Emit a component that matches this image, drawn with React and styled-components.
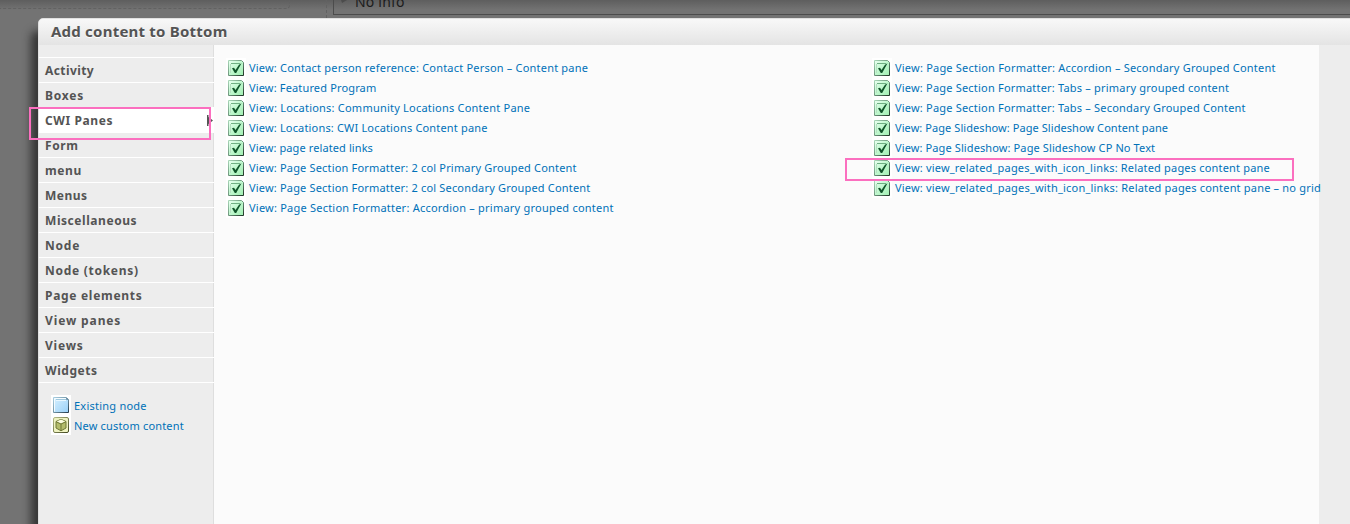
import React from "react";
import styled, { createGlobalStyle } from "styled-components";

const Global = createGlobalStyle`
  * { box-sizing: border-box; }
  html, body { margin: 0; padding: 0; overflow: hidden; }
  body { font-family: "Noto Sans", "Open Sans", sans-serif; }
`;

const Page = styled.div`
  position: relative;
  width: 1350px;
  height: 524px;
  overflow: hidden;
  background: linear-gradient(#5e5e5e, #737373 10px);
`;

const Backdrop = styled.div`
  display: flex;
  height: 18px;
  align-items: flex-start;
`;

const DashedRegion = styled.div`
  width: 290px;
  height: 9px;
  margin-right: 36px;
  border: 1px dashed #626262;
  border-width: 0 1px 1px 0;
  border-radius: 0 0 4px 0;
`;

const InfoRegion = styled.div`
  flex: 1;
  height: 18px;
  padding-left: 6px;
  border-left: 1px dashed #626262;
`;

const InfoPane = styled.div`
  display: flex;
  height: 15px;
  padding-left: 7px;
  border: 1px solid #4c4c4c;
  border-width: 0 0 1px 1px;
  color: #1c1c1c;
  font-size: 14px;
  line-height: 18px;
  letter-spacing: 0.2px;
  svg { flex: none; margin-right: 8px; }
  span { margin-top: -7px; }
`;

const Modal = styled.section`
  position: absolute;
  left: 38px;
  top: 18px;
  width: 1330px;
  height: 540px;
  display: flex;
  flex-direction: column;
  border: 1px solid #e0e0e0;
  border-radius: 5px 0 0 0;
  background: #ededed;
  box-shadow: -6px 14px 9px 1px rgba(25, 25, 25, 0.68);
`;

const Header = styled.header`
  height: 26px;
  flex: none;
  padding-left: 12px;
  border-radius: 4px 0 0 0;
  background: linear-gradient(#f8f8f8, #e4e4e4);
  color: #545454;
  font-size: 15px;
  font-weight: 700;
  line-height: 25px;
  letter-spacing: 0.22px;
  text-shadow: 0 1px 0 #fff;
`;

const Body = styled.div`
  display: flex;
  flex: 1;
`;

const Sidebar = styled.nav`
  width: 175px;
  flex: none;
  padding-top: 12px;
  border-right: 1px solid #dedede;
`;

const Categories = styled.div`
  margin-right: -1px;
  border-top: 1px solid #fff;
`;

const Category = styled.div`
  display: flex;
  align-items: center;
  justify-content: space-between;
  height: 25px;
  padding: 1px 1px 0 6px;
  border-bottom: 1px solid #fff;
  background: ${(p) => (p.$active ? "#fff" : "transparent")};
  color: #545454;
  font-size: 12px;
  font-weight: 700;
  line-height: 24px;
  letter-spacing: ${(p) => p.$tracking}px;
`;

const Tools = styled.div`
  width: 150px;
  margin: 12px 0 0 12px;
`;

const Content = styled.main`
  display: flex;
  width: 1105px;
  flex: none;
  padding: 13px 0 0 12px;
  background: #fbfbfb;
`;

const Column = styled.div`
  width: 646px;
  flex: none;
`;

const Row = styled.div`
  display: flex;
  height: 20px;
`;

const IconTile = styled.span`
  width: 20px;
  height: 20px;
  flex: none;
  padding: 2px;
  background: #fff;
  svg { display: block; }
`;

const Link = styled.a`
  margin-left: 3px;
  color: #0071b8;
  font-size: 11px;
  line-height: ${(p) => p.$leading || 20}px;
  white-space: nowrap;
  letter-spacing: ${(p) => p.$tracking || 0}px;
`;

const Highlight = styled.div`
  position: absolute;
  left: ${(p) => p.$x}px;
  top: ${(p) => p.$y}px;
  width: ${(p) => p.$w}px;
  height: ${(p) => p.$h}px;
  border: 2px solid #fb6fbf;
`;

const CheckIcon = () => (
  <svg width="16" height="16" viewBox="0 0 16 16">
    <defs>
      <linearGradient id="mint" x1="0" y1="0" x2="1" y2="1">
        <stop offset="0" stopColor="#ecfff2" />
        <stop offset="0.45" stopColor="#c2f8d0" />
        <stop offset="1" stopColor="#a0efb2" />
      </linearGradient>
      <linearGradient id="mintEdge" x1="0" y1="0" x2="1" y2="1">
        <stop offset="0" stopColor="#a9d7b8" />
        <stop offset="0.5" stopColor="#6d947c" />
        <stop offset="1" stopColor="#1d3224" />
      </linearGradient>
    </defs>
    <path d="M.5.5H13.5L15.5 2.5V15.5H.5Z" fill="url(#mint)" stroke="url(#mintEdge)" />
    <path d="M3 3.5H12" stroke="#6fae83" fill="none" />
    <path d="M2.5 4V13" stroke="#b4dfc0" fill="none" />
    <path d="M4 8.3 6 7.8 7.5 10 11 4.8 13.5 3.2 8.2 13H6.8Z" fill="#12552b" />
  </svg>
);

const NodeIcon = () => (
  <svg width="16" height="16" viewBox="0 0 16 16">
    <defs>
      <linearGradient id="sky" x1="0" y1="0" x2="1" y2="1">
        <stop offset="0" stopColor="#d8f1ff" />
        <stop offset="1" stopColor="#99d0f7" />
      </linearGradient>
      <linearGradient id="skyEdge" x1="0" y1="0" x2="1" y2="1">
        <stop offset="0" stopColor="#a9cfe2" />
        <stop offset="0.5" stopColor="#7394a5" />
        <stop offset="1" stopColor="#243b4b" />
      </linearGradient>
    </defs>
    <path d="M.5.5H13.5L15.5 2.5V15.5H.5Z" fill="url(#sky)" stroke="url(#skyEdge)" />
    <path d="M1.5 14.5V1.5H13" stroke="#f5fcff" fill="none" />
    <path d="M3 2.5H13" stroke="#9fc8de" fill="none" />
    <path d="M3 3.5H13" stroke="#e9f8ff" />
    <path d="M13.5 1V2.5H15" stroke="#6d91a8" fill="none" />
  </svg>
);

const BoxIcon = () => (
  <svg width="16" height="16" viewBox="0 0 16 16">
    <defs>
      <linearGradient id="oliveEdge" x1="0" y1="0" x2="1" y2="1">
        <stop offset="0" stopColor="#b6bc87" />
        <stop offset="1" stopColor="#41471f" />
      </linearGradient>
    </defs>
    <rect x=".5" y=".5" width="15" height="15" rx="1.5" fill="#eef2c0" stroke="url(#oliveEdge)" />
    <path d="M8 2.3 13 4.5V11L8 13.8 3 11V4.5Z" fill="#b3bc6b" stroke="#6f7837" />
    <path d="M8 2.6 12.3 4.6 8 6.7 3.7 4.6Z" fill="#fbfde0" />
    <path d="M3.2 4.8 8 7 12.8 4.8M8 7V13.5" stroke="#6f7837" fill="none" />
  </svg>
);

const ActiveArrow = () => (
  <svg width="6" height="11" viewBox="0 0 6 11">
    <path d="M0 0H1.5V2L6 5.5 1.5 9V11H0Z" fill="#555" />
    <path d="M2 4 3.8 5.5 2 7Z" fill="#999" />
  </svg>
);

const categories = [
  ["Activity", 0.4], ["Boxes", 0.8], ["CWI Panes", 0.6], ["Form", 0.6], ["menu", 0.6],
  ["Menus", 0.5], ["Miscellaneous", 0.56], ["Node", 0.8], ["Node (tokens)", 0.72],
  ["Page elements", 0.7], ["View panes", 0.88], ["Views", 0.8], ["Widgets", 0.55],
];

const columns = [
  [
    ["View: Contact person reference: Contact Person – Content pane", 0.2],
    ["View: Featured Program", 0.15],
    ["View: Locations: Community Locations Content Pane", 0.22],
    ["View: Locations: CWI Locations Content pane", 0.17],
    ["View: page related links", 0.1],
    ["View: Page Section Formatter: 2 col Primary Grouped Content", 0.18],
    ["View: Page Section Formatter: 2 col Secondary Grouped Content", 0.18],
    ["View: Page Section Formatter: Accordion – primary grouped content", 0.22],
  ],
  [
    ["View: Page Section Formatter: Accordion – Secondary Grouped Content", 0.21],
    ["View: Page Section Formatter: Tabs – primary grouped content", 0.2],
    ["View: Page Section Formatter: Tabs – Secondary Grouped Content", 0.2],
    ["View: Page Slideshow: Page Slideshow Content pane", 0.07],
    ["View: Page Slideshow: Page Slideshow CP No Text", 0.11],
    ["View: view_related_pages_with_icon_links: Related pages content pane", 0.18],
    ["View: view_related_pages_with_icon_links: Related pages content pane – no grid", 0.19],
  ],
];

export default function App() {
  return (
    <Page>
      <Global />
      <Backdrop>
        <DashedRegion />
        <InfoRegion>
          <InfoPane>
            <svg width="6" height="4" viewBox="0 0 6 4"><path d="M0 0H6L1 3Z" fill="#4c4c4c" /></svg>
            <span>No info</span>
          </InfoPane>
        </InfoRegion>
      </Backdrop>
      <Modal>
        <Header>Add content to Bottom</Header>
        <Body>
          <Sidebar>
            <Categories>
              {categories.map(([name, tracking]) => (
                <Category key={name} $active={name === "CWI Panes"} $tracking={tracking}>
                  {name}
                  {name === "CWI Panes" && <ActiveArrow />}
                </Category>
              ))}
            </Categories>
            <Tools>
              <Row><IconTile><NodeIcon /></IconTile><Link $leading={22} $tracking={0.24}>Existing node</Link></Row>
              <Row><IconTile><BoxIcon /></IconTile><Link $leading={22} $tracking={0.18}>New custom content</Link></Row>
            </Tools>
          </Sidebar>
          <Content>
            {columns.map((items, i) => (
              <Column key={i}>
                {items.map(([title, tracking]) => (
                  <Row key={title}>
                    <IconTile><CheckIcon /></IconTile>
                    <Link $tracking={tracking}>{title}</Link>
                  </Row>
                ))}
              </Column>
            ))}
          </Content>
        </Body>
      </Modal>
      <Highlight $x={29} $y={107} $w={182} $h={33} />
      <Highlight $x={845} $y={158} $w={449} $h={23} />
    </Page>
  );
}
